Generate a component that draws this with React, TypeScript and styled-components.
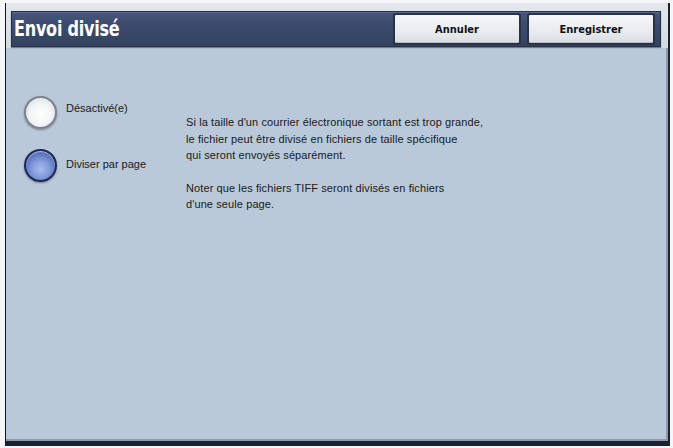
import { createGlobalStyle } from 'styled-components'
import styled from 'styled-components'

const GlobalStyle = createGlobalStyle`
  html, body {
    margin: 0;
    padding: 0;
    background: #f4f6f8;
  }
  #root {
    width: 673px;
    height: 448px;
  }
`

const Screen = styled.div`
  margin-left: 5px;
  margin-top: 3px;
  width: 662px;
  height: 438px;
  display: flex;
  flex-direction: column;
  background: #b9c9d9;
  border-left: 1px solid #101418;
  border-right: 2px solid #1c2230;
  border-bottom: 5px solid #1a2130;
  box-shadow: inset 0 -2px 0 #8d9aa8, inset -2px 0 0 #8d9aa8;
`

const HeaderArea = styled.div`
  padding: 8px 7px 1px 5px;
  background: linear-gradient(#e3e8ec, #d3dbe3);
`

const TitleBar = styled.div`
  height: 36px;
  display: flex;
  align-items: center;
  justify-content: space-between;
  padding: 0 5px 0 2px;
  box-sizing: border-box;
  background: linear-gradient(#46557a, #3b4a6b 45%, #34425f);
  border: 1px solid #27304a;
  box-shadow: inset 0 1px 0 #5b6a8c, 0 1px 1px #6f7d92;
`

const Title = styled.h1`
  margin: 0;
  color: #ffffff;
  font-family: 'Liberation Sans Narrow', 'DejaVu Sans Condensed', 'DejaVu Sans', sans-serif;
  font-stretch: condensed;
  font-weight: bold;
  font-size: 21px;
  letter-spacing: -0.3px;
  transform: scaleX(0.85);
  transform-origin: left center;
`

const Actions = styled.div`
  display: flex;
  gap: 6px;
`

const ActionButton = styled.button`
  width: 128px;
  height: 32px;
  border: 2px solid #2a3144;
  border-radius: 3px;
  background: linear-gradient(#f6f7f9, #e8ebef 60%, #d9dde3);
  box-shadow: inset 0 -1px 0 #b8bec8;
  font-family: 'DejaVu Sans Condensed', 'Liberation Sans', Arial, sans-serif;
  font-stretch: condensed;
  font-weight: bold;
  font-size: 11px;
  color: #111;
  padding: 0;
`

const Body = styled.div`
  flex: 1;
  display: flex;
  padding: 48px 0 0 18px;
`

const Options = styled.div`
  display: flex;
  flex-direction: column;
  gap: 20px;
  width: 162px;
`

const Option = styled.div`
  display: flex;
  align-items: center;
  gap: 9px;
`

const Radio = styled.span<{ $checked?: boolean }>`
  width: 33px;
  height: 33px;
  border-radius: 50%;
  box-sizing: border-box;
  flex: none;
  border: 2px solid ${p => (p.$checked ? '#1c2858' : '#7d828c')};
  background: ${p =>
    p.$checked
      ? 'radial-gradient(circle at 50% 62%, #a6bcef 0%, #7f98d8 40%, #4a62ae 80%, #2b3c80 100%)'
      : 'radial-gradient(circle at 50% 55%, #ffffff 0%, #f3f4f6 50%, #d6d9de 85%, #b2b6bd 100%)'};
  box-shadow: 0 1px 2px rgba(40, 50, 70, 0.5), inset 0 1px 1px rgba(255, 255, 255, 0.6);
`

const Label = styled.span<{ $raise?: number }>`
  margin-bottom: ${p => p.$raise ?? 0}px;
  font-family: 'Liberation Sans', Arial, sans-serif;
  font-size: 11px;
  color: #1a1a1a;
`

const Description = styled.div`
  padding-top: 18px;
  font-family: 'Liberation Sans', Arial, sans-serif;
  font-size: 11px;
  line-height: 16.5px;
  letter-spacing: 0.1px;
  color: #1a1a1a;
`

const Paragraph = styled.p`
  margin: 0 0 16px;
`

export default function App() {
  return (
    <>
      <GlobalStyle />
      <Screen>
        <HeaderArea>
          <TitleBar>
            <Title>Envoi divisé</Title>
            <Actions>
              <ActionButton>Annuler</ActionButton>
              <ActionButton>Enregistrer</ActionButton>
            </Actions>
          </TitleBar>
        </HeaderArea>
        <Body>
          <Options>
            <Option>
              <Radio />
              <Label $raise={10}>Désactivé(e)</Label>
            </Option>
            <Option>
              <Radio $checked />
              <Label $raise={4}>Diviser par page</Label>
            </Option>
          </Options>
          <Description>
            <Paragraph>
              Si la taille d'un courrier électronique sortant est trop grande,
              <br />
              le fichier peut être divisé en fichiers de taille spécifique
              <br />
              qui seront envoyés séparément.
            </Paragraph>
            <Paragraph>
              Noter que les fichiers TIFF seront divisés en fichiers
              <br />
              d'une seule page.
            </Paragraph>
          </Description>
        </Body>
      </Screen>
    </>
  )
}
